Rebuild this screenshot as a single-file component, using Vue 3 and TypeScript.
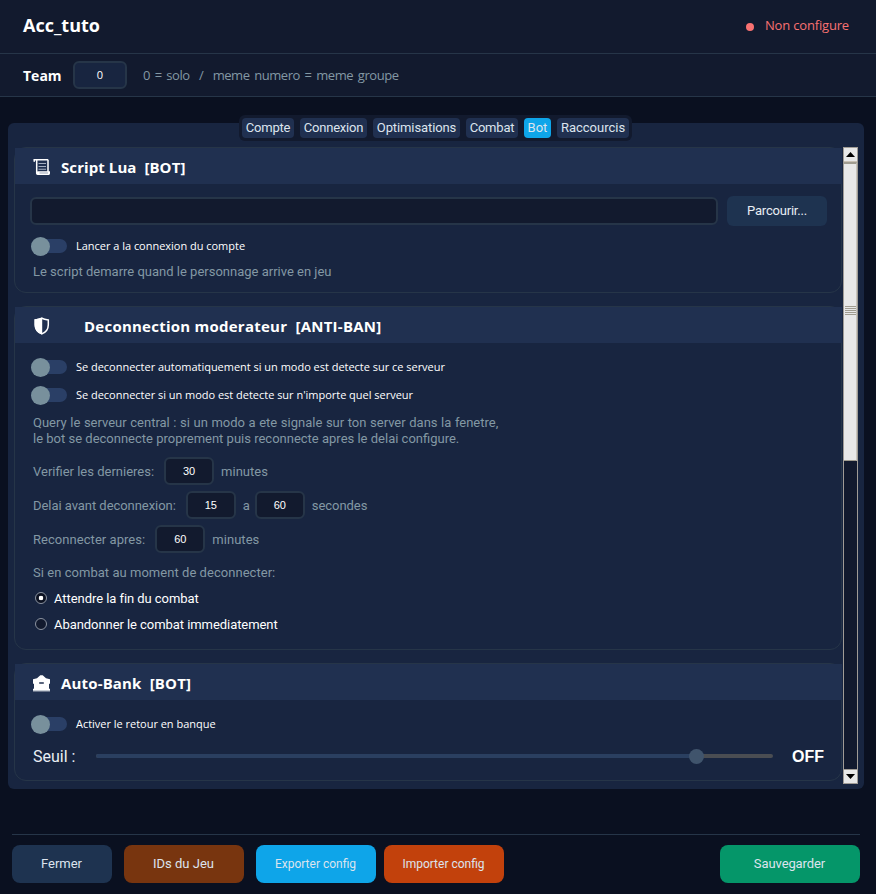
<script setup lang="ts">
import { ref } from 'vue'

const tabs = ['Compte', 'Connexion', 'Optimisations', 'Combat', 'Bot', 'Raccourcis']
const activeTab = ref('Bot')
const team = ref('0')
const scriptPath = ref('')
const checkMinutes = ref('30')
const delayMin = ref('15')
const delayMax = ref('60')
const reconnectAfter = ref('60')
const combatMode = ref<'wait' | 'leave'>('wait')
const threshold = ref(88.8)
</script>

<template>
  <div class="window">
    <header class="title-bar">
      <h1>Acc_tuto</h1>
      <div class="status"><span class="dot"></span><span>Non configure</span></div>
    </header>
    <div class="team-bar">
      <span class="team-label">Team</span>
      <input v-model="team" class="team-input" />
      <span class="team-hint">0 = solo&nbsp; /&nbsp; meme numero = meme groupe</span>
    </div>

    <main class="content">
      <nav class="tabs">
        <button
          v-for="tab in tabs"
          :key="tab"
          :class="['tab', 'tab-' + tab.toLowerCase(), { active: tab === activeTab }]"
          @click="activeTab = tab"
        >{{ tab }}</button>
      </nav>

      <div class="panel">
        <div class="cards">
          <section class="card script">
            <h2>
              <svg class="icon" width="19" height="19" viewBox="0 0 19 19">
                <path d="M2.200 3.200V1.700H15.700" fill="none" stroke="#fff" stroke-width="1.500" stroke-linecap="round" />
                <path d="M4.700 2v13.500M16 2v12.500" stroke="#fff" stroke-width="1.500" />
                <path d="M5.500 13.200H18v1.800c0 1.400-.6 2-1.700 2H5.700c-1.200 0-1.700-.7-1.700-2z" fill="#fff" />
                <path d="M7.500 15h8.500" stroke="#8d97ab" stroke-width="0.900" />
                <path d="M6.500 5.500h7.500M6.500 8.500h7.500M6.500 11.200h7.500" stroke="#a4aec0" stroke-width="1.100" />
              </svg>
              <span>Script Lua&nbsp; [BOT]</span>
            </h2>
            <div class="body">
              <div class="path-row">
                <input v-model="scriptPath" class="path-input" />
                <button class="browse">Parcourir...</button>
              </div>
              <label class="switch"><span class="track"><i></i></span><span>Lancer a la connexion du compte</span></label>
              <p class="note">Le script demarre quand le personnage arrive en jeu</p>
            </div>
          </section>

          <section class="card moderator">
            <h2>
              <svg class="icon" width="19" height="19" viewBox="0 0 19 19">
                <path d="M9.800 1.300c2 .9 4.200 1.300 6.500 1.600v4.800c0 4.600-2.300 7.500-6.500 9.200-4.200-1.700-6.500-4.600-6.500-9.200V2.900c2.300-.3 4.500-.7 6.500-1.600z" fill="none" stroke="#fff" stroke-width="1.500" />
                <path d="M10.200 0.600v17c-4.900-1.700-7.700-4.900-7.700-9.800V2.300c2.900-.3 5.500-.8 7.700-1.700z" fill="#fff" />
              </svg>
              <span>Deconnection moderateur&nbsp; [ANTI-BAN]</span>
            </h2>
            <div class="body">
              <label class="switch"><span class="track"><i></i></span><span>Se deconnecter automatiquement si un modo est detecte sur ce serveur</span></label>
              <label class="switch"><span class="track"><i></i></span><span>Se deconnecter si un modo est detecte sur n'importe quel serveur</span></label>
              <p class="note query"><span class="spread">Query le serveur central : si un modo a ete signale sur ton server dans la fenetre,</span><br />le bot se deconnecte proprement puis reconnecte apres le delai configure.</p>
              <div class="field-row">
                <span>Verifier les dernieres:</span>
                <input v-model="checkMinutes" />
                <span>minutes</span>
              </div>
              <div class="field-row delay">
                <span>Delai avant deconnexion:</span>
                <input v-model="delayMin" />
                <span>a</span>
                <input v-model="delayMax" />
                <span>secondes</span>
              </div>
              <div class="field-row reconnect">
                <span>Reconnecter apres:</span>
                <input v-model="reconnectAfter" />
                <span>minutes</span>
              </div>
              <p class="note question">Si en combat au moment de deconnecter:</p>
              <label class="radio"><input v-model="combatMode" type="radio" value="wait" /><span>Attendre la fin du combat</span></label>
              <label class="radio"><input v-model="combatMode" type="radio" value="leave" /><span>Abandonner le combat immediatement</span></label>
            </div>
          </section>

          <section class="card bank">
            <h2>
              <svg class="icon" width="19" height="19" viewBox="0 0 19 19">
                <path d="M1 5.300 5 4.300 8.300 1.200h2.400L14 4.300l4 1v4.400h-1v5h1v2.500H1v-2.500h1v-5H1z" fill="#fff" />
                <path d="M7.200 9h4.600" stroke="#203050" stroke-width="1.500" />
                <path d="M1 16.700h17" stroke="#b9c0cc" />
              </svg>
              <span>Auto-Bank&nbsp; [BOT]</span>
            </h2>
            <div class="body">
              <label class="switch"><span class="track"><i></i></span><span>Activer le retour en banque</span></label>
              <div class="slider-row">
                <span class="slider-label">Seuil :</span>
                <div class="slider">
                  <div class="filled" :style="{ width: threshold + '%' }"><i></i></div>
                </div>
                <strong>OFF</strong>
              </div>
            </div>
          </section>
        </div>

        <div class="scrollbar">
          <div class="arrow"><svg width="9" height="5" viewBox="0 0 9 5"><path d="M0 5 4.500 0 9 5z" fill="#000" /></svg></div>
          <div class="thumb"><span class="grip"></span></div>
          <div class="trough"></div>
          <div class="arrow"><svg width="9" height="5" viewBox="0 0 9 5"><path d="M0 0h9L4.500 5z" fill="#000" /></svg></div>
        </div>
      </div>
    </main>

    <footer class="actions">
      <button class="close">Fermer</button>
      <button class="ids">IDs du Jeu</button>
      <button class="export">Exporter config</button>
      <button class="import">Importer config</button>
      <button class="save">Sauvegarder</button>
    </footer>
  </div>
</template>

<style>
body {
  background: #0a1020;
}
</style>

<style scoped>
* {
  box-sizing: border-box;
}
.window {
  display: flex;
  flex-direction: column;
  height: 894px;
  overflow: hidden;
  background: #0a1020;
  font: 13px/16px Roboto, 'Liberation Sans', sans-serif;
  color: #e8eef4;
}
h1, h2, p {
  margin: 0;
}
button, input {
  border: 0;
  padding: 0;
  margin: 0;
  font: inherit;
  color: inherit;
  outline: none;
}
.title-bar {
  display: flex;
  align-items: center;
  justify-content: space-between;
  height: 54px;
  padding: 0 27px 3px 23px;
  background: #121a2e;
  border-bottom: 1px solid #263548;
}
h1 {
  font: bold 18px/24px 'Open Sans', 'Noto Sans', sans-serif;
  color: #fff;
}
.status {
  display: flex;
  align-items: center;
  gap: 11px;
  font: 13px/18px 'Open Sans', 'Noto Sans', sans-serif;
  letter-spacing: -0.17px;
  color: #f87171;
}
.dot {
  width: 8px;
  height: 8px;
  margin-top: 3px;
  border-radius: 50%;
  background: #f87171;
}
.team-bar {
  display: flex;
  align-items: center;
  height: 43px;
  padding: 0 23px;
  background: #121a2e;
  border-bottom: 1px solid #263548;
  font-family: 'Open Sans', 'Noto Sans', sans-serif;
}
.team-label {
  width: 50px;
  padding-top: 1px;
  font-weight: bold;
  font-size: 14px;
  color: #fff;
}
.team-input {
  width: 54px;
  height: 28px;
  padding-bottom: 2px;
  border: 2px solid #263548;
  border-radius: 6px;
  background: #182540;
  font-size: 11px;
  text-align: center;
  color: #fff;
}
.team-hint {
  margin-left: 16px;
  letter-spacing: -0.45px;
  word-spacing: 1.750px;
  color: #8398a4;
}
.content {
  display: flex;
  flex-direction: column;
  padding: 18px 12px 0 8px;
}
.tabs {
  display: flex;
  align-self: center;
  position: relative;
  gap: 6px;
  height: 26px;
  margin: 0 0 -18px -1px;
  padding: 3px;
  border-radius: 6px;
  background: #121a2e;
}
.tab {
  height: 20px;
  border-radius: 4px;
  background: #203050;
  line-height: 20px;
  text-align: center;
  color: #dce4ee;
}
.tab.active {
  background: #0ea5e9;
}
.tab-compte { width: 52px; letter-spacing: -0.2px; }
.tab-connexion { width: 67px; letter-spacing: -0.2px; }
.tab-optimisations { width: 87px; letter-spacing: -0.1px; }
.tab-combat { width: 52px; letter-spacing: -0.2px; }
.tab-bot { width: 27px; }
.tab-raccourcis { width: 72px; }
.panel {
  display: flex;
  height: 666px;
  padding: 24px 6px 5px;
  border-radius: 6px;
  background: #182540;
}
.cards {
  display: flex;
  flex-direction: column;
  gap: 13px;
  width: 828px;
  height: 634px;
}
.card {
  border: 1px solid #263548;
  border-radius: 12px;
}
.card.script { height: 146px; }
.card.moderator { height: 344px; }
.card.bank { height: 118px; }
h2 {
  display: flex;
  align-items: center;
  height: 36px;
  margin-right: -1px;
  padding-left: 17px;
  background: #203050;
  font: bold 15px/20px 'Open Sans', 'Noto Sans', sans-serif;
  color: #fff;
}
.icon {
  flex: none;
  margin: 2px 10px 0 0;
}
h2 span {
  padding-top: 2px;
}
.script h2 { letter-spacing: 0.08px; }
.moderator h2 { letter-spacing: 0.24px; }
.bank h2 { letter-spacing: 0.16px; }
.moderator .icon { margin-right: 33px; }
.body {
  display: flex;
  flex-direction: column;
  padding: 0 14px 0 15px;
}
.path-row {
  display: flex;
  align-items: center;
  gap: 9px;
  margin-top: 12px;
}
.path-input {
  width: 688px;
  height: 28px;
  border: 2px solid #263548;
  border-radius: 6px;
  background: #121a2e;
}
.browse {
  width: 100px;
  height: 30px;
  border-radius: 6px;
  background: #1e3350;
  letter-spacing: -0.2px;
}
.switch {
  display: flex;
  align-items: center;
  gap: 9px;
  height: 20px;
  padding-left: 1px;
  font: 11px/16px 'Open Sans', 'Noto Sans', sans-serif;
  letter-spacing: -0.02px;
  color: #fff;
}
.track {
  display: flex;
  align-items: center;
  width: 36px;
  height: 14px;
  border-radius: 7px;
  background: #2a3f66;
}
.track i {
  width: 19px;
  height: 19px;
  border-radius: 50%;
  background: #78909c;
}
.note {
  padding-left: 3px;
  color: #8398a4;
}
.script .switch { margin-top: 10px; }
.script .note { margin-top: 8px; }
.moderator .switch { margin-top: 14px; }
.moderator .switch + .switch { margin-top: 8px; }
.query {
  margin: 10px 0 4px;
}
.spread {
  word-spacing: 0.350px;
}
.field-row {
  display: flex;
  align-items: center;
  height: 28px;
  margin-top: 6px;
  padding-left: 3px;
  color: #8398a4;
}
.field-row span {
  padding-top: 2px;
}
.delay span {
  letter-spacing: -0.05px;
}
.reconnect span {
  letter-spacing: 0.05px;
}
.field-row input {
  width: 50px;
  height: 28px;
  margin: 0 7px 0 10px;
  padding-bottom: 1px;
  border: 2px solid #263548;
  border-radius: 6px;
  background: #121a2e;
  font: 11px 'Liberation Sans', sans-serif;
  text-align: center;
  color: #fff;
}
.field-row input + span + input {
  margin-left: 5px;
}
.question {
  margin-top: 12px;
  letter-spacing: 0.04px;
}
.radio {
  display: flex;
  align-items: center;
  gap: 7px;
  height: 20px;
  margin-top: 6px;
  padding-left: 5px;
  letter-spacing: -0.06px;
  color: #fff;
}
.radio span {
  padding-top: 2px;
}
.question + .radio {
  margin-top: 7px;
}
.radio input {
  appearance: none;
  width: 12px;
  height: 12px;
  border: 1px solid #8b93a0;
  border-radius: 50%;
  background: #121a2e;
}
.radio input:checked {
  background: radial-gradient(circle, #fff 0 2px, #0c1222 2.600px);
}
.bank .switch { margin-top: 14px; }
.slider-row {
  display: flex;
  align-items: center;
  height: 24px;
  margin-top: 10px;
  padding-left: 3px;
  font-size: 16px;
}
.slider-label {
  width: 63px;
  padding-top: 2px;
}
.slider {
  width: 677px;
  height: 4px;
  border-radius: 2px;
  background: #4a4d52;
}
.filled {
  display: flex;
  align-items: center;
  justify-content: flex-end;
  height: 4px;
  border-radius: 2px;
  background: #2a3f60;
}
.filled i {
  flex: none;
  width: 15px;
  height: 15px;
  margin-right: -7px;
  border-radius: 50%;
  background: #40546c;
}
.slider-row strong {
  margin-left: 19px;
  padding-top: 2px;
  font: bold 16px 'Liberation Sans', sans-serif;
  color: #fff;
}
.scrollbar {
  display: flex;
  flex-direction: column;
  width: 15px;
  height: 637px;
  margin-left: 1px;
  border: 1px solid #a09c96;
  background: #121a2e;
}
.arrow {
  display: flex;
  align-items: center;
  justify-content: center;
  flex: none;
  height: 14px;
  background: #e8e8e8;
}
.arrow:first-child {
  border-bottom: 1px solid #c8c0b4;
}
.arrow:last-child {
  border-top: 1px solid #a09c96;
}
.thumb {
  display: flex;
  flex: none;
  align-items: center;
  justify-content: center;
  height: 299px;
  padding-bottom: 3px;
  border: 1px solid #c8c4bc;
  border-width: 2px 1px 1px 0;
  border-top-color: #a09c90;
  border-bottom-color: #a09c90;
  background: #e8e8e8;
}
.grip {
  width: 11px;
  height: 9px;
  background: repeating-linear-gradient(#a09c90 0 1px, #e8e8e8 1px 2px);
}
.trough {
  flex: 1;
}
.actions {
  display: flex;
  height: 60px;
  margin: 45px 16px 0 12px;
  padding-top: 10px;
  border-top: 1px solid #263548;
}
.actions button {
  width: 120px;
  height: 38px;
  padding-right: 1px;
  border-radius: 8px;
  color: #dce4ee;
}
.actions .close { width: 100px; margin-right: 12px; background: #1e3350; }
.actions .ids { margin-right: 12px; background: #78350f; }
.actions .export { margin-right: 8px; background: #0ea5e9; font-size: 12px; }
.actions .import { background: #c2410c; font-size: 12px; }
.actions .save { width: 140px; margin-left: auto; background: #059669; letter-spacing: -0.1px; }
</style>
